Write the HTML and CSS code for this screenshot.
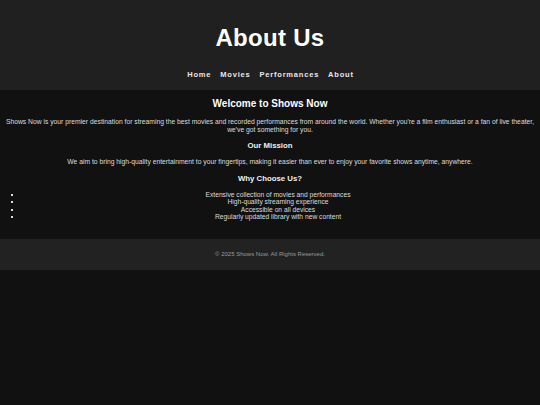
FILE: index.html
```html
<!DOCTYPE html>
<html lang="en">
<head>
<meta charset="utf-8">
<title>About Us - Shows Now</title>
<link rel="stylesheet" href="styles.css">
</head>
<body>
<header class="site-header">
  <h1 class="site-title">About Us</h1>
  <nav class="site-nav">
    <a href="#">Home</a>
    <a href="#">Movies</a>
    <a href="#">Performances</a>
    <a href="#">About</a>
  </nav>
</header>
<main class="content">
  <h2 class="section-title">Welcome to Shows Now</h2>
  <p class="text">Shows Now is your premier destination for streaming the best movies and recorded performances from around the world. Whether you're a film enthusiast or a fan of live theater, we've got something for you.</p>
  <h3 class="sub-title">Our Mission</h3>
  <p class="text">We aim to bring high-quality entertainment to your fingertips, making it easier than ever to enjoy your favorite shows anytime, anywhere.</p>
  <h3 class="sub-title">Why Choose Us?</h3>
  <ul class="features">
    <li>Extensive collection of movies and performances</li>
    <li>High-quality streaming experience</li>
    <li>Accessible on all devices</li>
    <li>Regularly updated library with new content</li>
  </ul>
</main>
<footer class="site-footer">
  <p>&copy; 2025 Shows Now. All Rights Reserved.</p>
</footer>
</body>
</html>
```
FILE: styles.css
```css
html, body {
  margin: 0;
  padding: 0;
  background: #111111;
  color: #e6e6e6;
  font-family: "Liberation Sans", Arial, sans-serif;
}

.site-header {
  background: #202020;
  text-align: center;
  padding: 22px 0 9px;
}

.site-title {
  margin: 0;
  font-size: 24px;
  line-height: 32px;
  font-weight: bold;
  letter-spacing: 0.3px;
  color: #ffffff;
}

.site-nav {
  display: flex;
  justify-content: center;
  gap: 9px;
  margin-top: 15px;
  padding-left: 1px;
}

.site-nav a {
  color: #e8e8e8;
  text-decoration: none;
  font-weight: bold;
  font-size: 7.5px;
  line-height: 12px;
  letter-spacing: 0.8px;
}

.content {
  text-align: center;
  padding: 8px 2px 18px;
}

.section-title {
  margin: 0 0 8px;
  font-size: 10px;
  line-height: 12px;
  color: #ffffff;
}

.sub-title {
  margin: 8px 0 7px;
  font-size: 7.8px;
  line-height: 10px;
  color: #f0f0f0;
}

.text {
  margin: 0;
  font-size: 6.75px;
  line-height: 7.5px;
  color: #dddddd;
}

.features {
  margin: 7px 0 0;
  padding: 0 4px 0 20px;
  list-style: square;
  font-size: 6.7px;
  line-height: 7.6px;
  color: #dddddd;
}

.site-footer {
  background: #222222;
  text-align: center;
  padding: 11.5px 0;
}

.site-footer p {
  margin: 0;
  font-size: 6px;
  line-height: 8px;
  color: #9a9a9a;
}
```
